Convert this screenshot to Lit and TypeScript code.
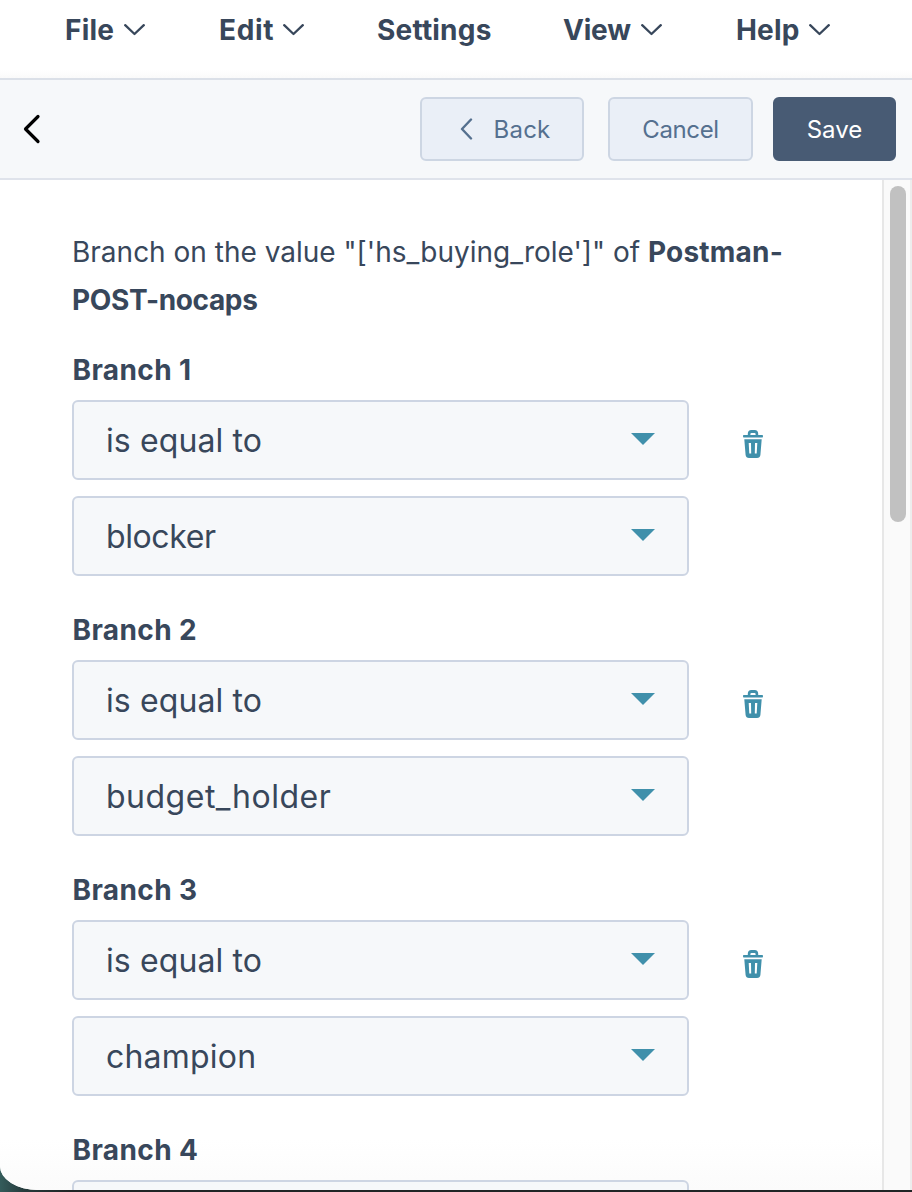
import { LitElement, html, css } from "lit";
import { customElement, property } from "lit/decorators.js";
import { styleMap } from "lit/directives/style-map.js";

@customElement("select-field")
class SelectField extends LitElement {
  @property() value = "";
  @property({ type: Number }) tracking = 0.1;
  static styles = css`
    :host { display: block; }
    .field {
      box-sizing: border-box; width: 617px; height: 80px; padding: 2px 32px 0;
      border: 2px solid #cdd5e3; border-radius: 6px; background: #f6f8fa;
      display: flex; align-items: center; justify-content: space-between;
      font-size: 32px; line-height: 48px; font-weight: 400; color: #38475b;
    }
    .caret { display: block; margin-top: -4px; }
  `;
  render() {
    return html`<div class="field">
      <span style=${styleMap({ letterSpacing: `${this.tracking}px` })}>${this.value}</span>
      <svg class="caret" width="24" height="12" viewBox="0 0 24 12"><path d="M0 0H24L12 12Z" fill="#4090ab" /></svg>
    </div>`;
  }
}

@customElement("branch-block")
class BranchBlock extends LitElement {
  @property() label = "";
  @property() operator = "is equal to";
  @property() value = "";
  @property({ type: Number }) tracking = 0;
  static styles = css`
    :host { display: block; height: 260px; }
    .label { height: 48px; line-height: 48px; font-size: 28px; font-weight: 700; letter-spacing: 0.4px; padding-left: 0.500px; margin-bottom: 6px; }
    .row { display: flex; align-items: center; gap: 54px; margin-bottom: 16px; }
    .trash { display: block; margin-top: 8px; }
  `;
  render() {
    return html`
      <div class="label">${this.label}</div>
      <div class="row">
        <select-field .value=${this.operator}></select-field>
        <svg class="trash" width="20" height="28" viewBox="0 0 20 28" fill="#4090ab">
          <path fill-rule="evenodd" d="M4.800 5V3.800Q4.800 0 8.400 0H11.600Q15.200 0 15.200 3.800V5H19.300Q20 5 20 6.200T19.300 7.500H.7Q0 7.500 0 6.200T.7 5ZM7.400 5H12.600V4Q12.600 2.900 11.500 2.900H8.500Q7.400 2.900 7.400 4Z" />
          <path fill-rule="evenodd" d="M1.300 9.300H18.700L17.400 25Q17 28 14 28H6Q3 28 2.600 25ZM5.700 13 6.300 23.500H8.200L8 13ZM12 13 11.800 23.500H13.700L14.300 13Z" />
        </svg>
      </div>
      <select-field .value=${this.value} .tracking=${this.tracking}></select-field>
    `;
  }
}

@customElement("app-root")
class AppRoot extends LitElement {
  static styles = css`
    :host { display: block; font-family: Inter, "Noto Sans", sans-serif; color: #38475b; }
    .window {
      box-sizing: border-box; width: 912px; height: 1192px; overflow: hidden;
      background: linear-gradient(90deg, #345c5b 0, #263b3c 24px, #202525 70px, #202525 100%);
    }
    .page {
      box-sizing: border-box; height: 1190px; overflow: hidden; background: #fff;
      border-bottom-left-radius: 38px 24px; display: flex; flex-direction: column;
    }
    .menu {
      box-sizing: border-box; flex: none; height: 80px; border-bottom: 2px solid #dbe0e8;
      background: linear-gradient(#fff 70px, #fafafa 78px);
      padding: 10px 0 0 65px; display: flex; align-items: flex-start;
      font-size: 28px; line-height: 40px; font-weight: 700; letter-spacing: 0.2px;
    }
    .item { display: flex; align-items: center; justify-content: space-between; flex: none; white-space: nowrap; }
    .file { width: 80px; margin-right: 74px; }
    .edit { width: 85px; margin-right: 73px; letter-spacing: 0.7px; }
    .settings { width: 115px; margin-right: 71px; }
    .view { width: 99px; margin-right: 74px; letter-spacing: -0.2px; }
    .help { width: 94px; }
    .toolbar {
      box-sizing: border-box; flex: none; height: 100px; border-bottom: 2px solid #dfe3eb; background: #f6f8fa;
      padding: 0 16px 0 23px; display: flex; align-items: center;
    }
    .prev { display: block; margin-right: auto; }
    .btn {
      box-sizing: border-box; height: 64px; border: 2px solid #cdd6e3; border-radius: 6px;
      background: #eaeff7; color: #55708f; font-size: 24px;
      display: flex; align-items: center; justify-content: center; white-space: nowrap;
    }
    .back { width: 164px; gap: 21px; padding-left: 6px; margin-right: 24px; letter-spacing: 0.2px; }
    .cancel { width: 145px; margin-right: 20px; letter-spacing: -0.4px; }
    .save { width: 123px; background: #485b74; border-color: #485b74; color: #fff; }
    .body { flex: 1; min-height: 0; display: flex; }
    .content {
      box-sizing: border-box; width: 882px; flex: none; overflow: hidden; padding: 48px 72px 0;
      background: linear-gradient(#fff 960px, #fbfbfb 1010px);
    }
    .intro { margin: 0 0 22px; font-size: 28px; line-height: 48px; white-space: nowrap; }
    .regular { font-weight: 400; }
    .first { letter-spacing: 0.2px; }
    .second { letter-spacing: -0.35px; }
    .track {
      box-sizing: border-box; flex: 1; border-left: 2px solid #e7e7e7; border-right: 2px solid #ededed;
      background: #fafafa; padding: 6px 4px 0 6px;
    }
    .thumb { width: 16px; height: 336px; border-radius: 8px; background: #c1c1c1; }
  `;

  chevron() {
    return html`<svg width="21" height="12" viewBox="0 0 21 12" fill="none" stroke="#38475b" stroke-width="2.300" stroke-linecap="round" stroke-linejoin="round"><path d="M1.200 1.200 10.500 10 19.800 1.200" /></svg>`;
  }

  render() {
    return html`<div class="window"><div class="page">
      <nav class="menu">
        <div class="item file"><span>File</span>${this.chevron()}</div>
        <div class="item edit"><span>Edit</span>${this.chevron()}</div>
        <div class="item settings"><span>Settings</span></div>
        <div class="item view"><span>View</span>${this.chevron()}</div>
        <div class="item help"><span>Help</span>${this.chevron()}</div>
      </nav>
      <div class="toolbar">
        <svg class="prev" width="18" height="30" viewBox="0 0 18 30" fill="none" stroke="#000" stroke-width="3.200" stroke-linecap="round" stroke-linejoin="round"><path d="M15 2.500 2.500 15 15 27.500" /></svg>
        <div class="btn back"><svg width="13" height="22" viewBox="0 0 13 22" fill="none" stroke="#55708f" stroke-width="2.400" stroke-linecap="round" stroke-linejoin="round"><path d="M11 1.500 2 11 11 20.500" /></svg><span>Back</span></div>
        <div class="btn cancel"><span>Cancel</span></div>
        <div class="btn save"><span>Save</span></div>
      </div>
      <div class="body">
        <main class="content">
          <p class="intro"><span class="regular">Branch on the value "['hs_buying_role']" of </span><b class="first">Postman-</b><br /><b class="second">POST-nocaps</b></p>
          <branch-block label="Branch 1" value="blocker" tracking="-0.4"></branch-block>
          <branch-block label="Branch 2" value="budget_holder" tracking="0.5"></branch-block>
          <branch-block label="Branch 3" value="champion" tracking="0.2"></branch-block>
          <branch-block label="Branch 4" operator=""></branch-block>
        </main>
        <div class="track"><div class="thumb"></div></div>
      </div>
    </div></div>`;
  }
}
